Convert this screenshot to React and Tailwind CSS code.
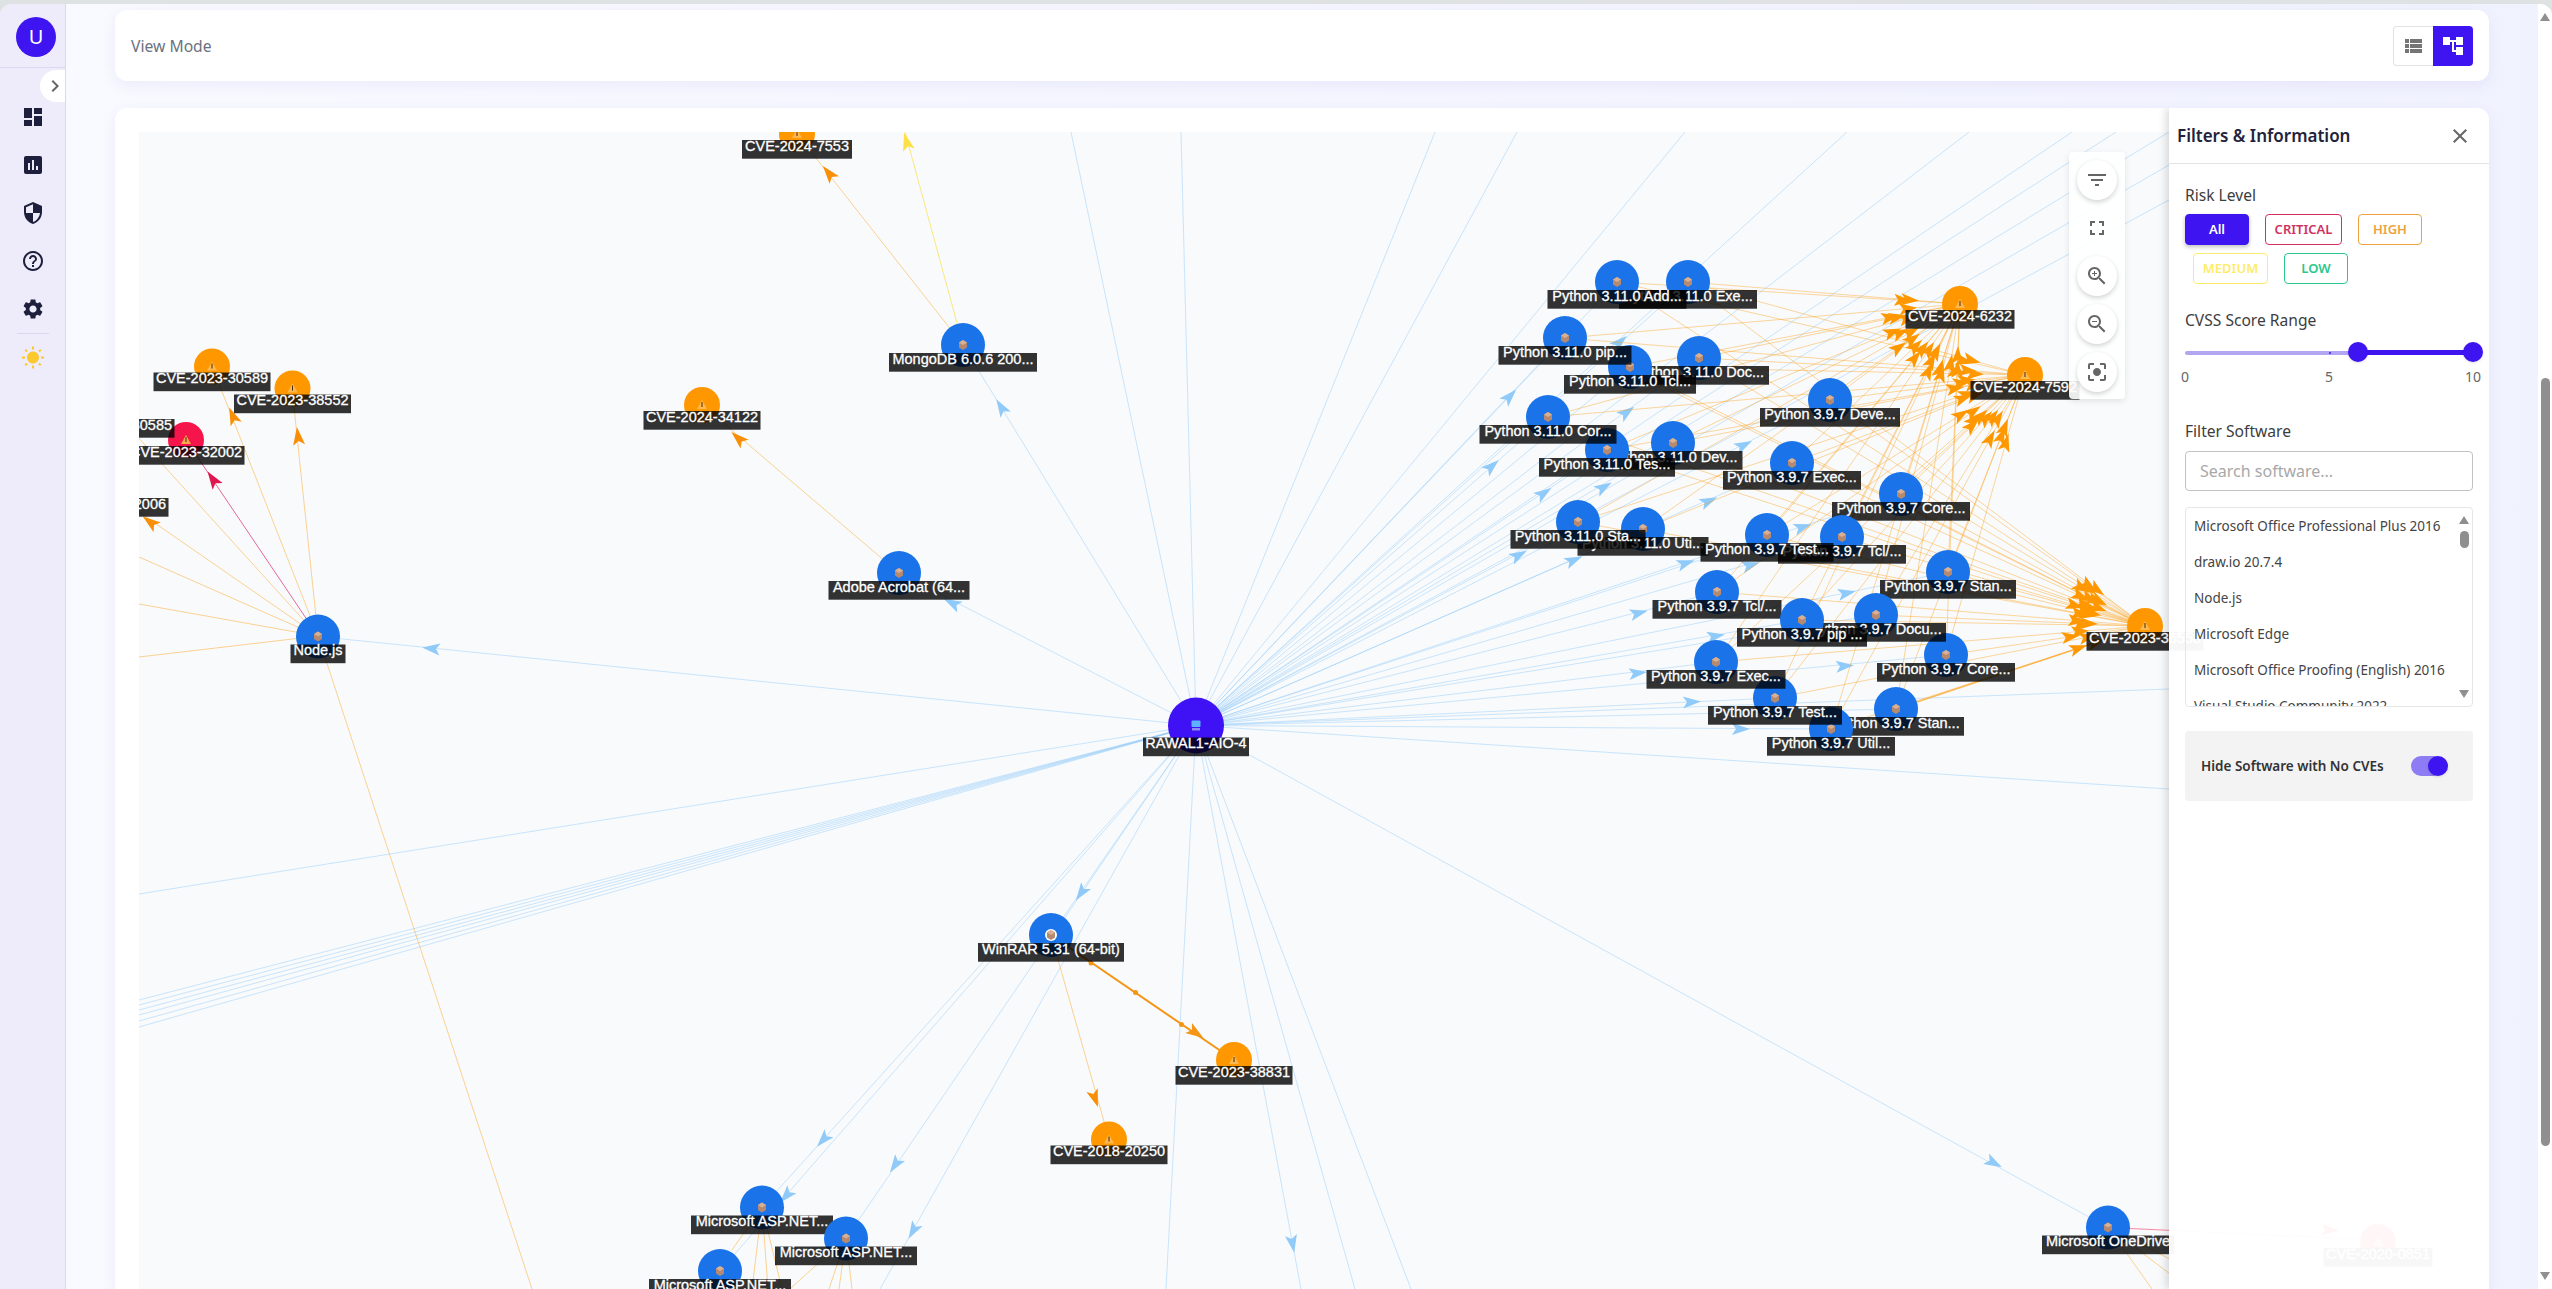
import React from 'react';

const SERVER = { x: 1196, y: 725.5 };
const CVE_6232 = { x: 1960, y: 304 };
const CVE_7592 = { x: 2025, y: 375 };
const CVE_3655 = { x: 2145, y: 626 };

// --- Graph data, in page pixels ---
const python = [
  { x: 1688, y: 282, t: 'Python 3.11.0 Exe...', w: 138, ax: 1620, ay: 342 },
  { x: 1617, y: 282, t: 'Python 3.11.0 Add...', w: 139, ax: 1510, ay: 396 },
  { x: 1699, y: 358, t: 'Python 3.11.0 Doc...', w: 140, ax: 1627, ay: 412 },
  { x: 1630, y: 367, t: 'Python 3.11.0 Tcl...', w: 132 },
  { x: 1565, y: 338, t: 'Python 3.11.0 pip...', w: 133 },
  { x: 1830, y: 400, t: 'Python 3.9.7 Deve...', w: 140, ax: 1744, ay: 445 },
  { x: 1673, y: 443, t: 'Python 3.11.0 Dev...', w: 139, ax: 1604, ay: 487 },
  { x: 1607, y: 450, t: 'Python 3.11.0 Tes...', w: 136, ax: 1544, ay: 493 },
  { x: 1548, y: 417, t: 'Python 3.11.0 Cor...', w: 137, ax: 1492, ay: 466 },
  { x: 1792, y: 463, t: 'Python 3.9.7 Exec...', w: 138, ax: 1709, ay: 501 },
  { x: 1901, y: 494, t: 'Python 3.9.7 Core...', w: 138, ax: 1803, ay: 527 },
  { x: 1643, y: 529, t: 'Python 3.11.0 Uti...', w: 131, ax: 1574, ay: 560 },
  { x: 1578, y: 522, t: 'Python 3.11.0 Sta...', w: 135, ax: 1519, ay: 555 },
  { x: 1842, y: 537, t: 'Python 3.9.7 Tcl/...', w: 128, ax: 1751, ay: 565 },
  { x: 1767, y: 535, t: 'Python 3.9.7 Test...', w: 133, ax: 1686, ay: 563 },
  { x: 1948, y: 572, t: 'Python 3.9.7 Stan...', w: 136, ax: 1847, ay: 593 },
  { x: 1717, y: 592, t: 'Python 3.9.7 Tcl/...', w: 129, ax: 1639, ay: 613 },
  { x: 1946, y: 655, t: 'Python 3.9.7 Core...', w: 138, ax: 1845, ay: 666 },
  { x: 1876, y: 615, t: 'Python 3.9.7 Docu...', w: 140 },
  { x: 1802, y: 620, t: 'Python 3.9.7 pip ...', w: 130, ax: 1716, ay: 636 },
  { x: 1896, y: 709, t: 'Python 3.9.7 Stan...', w: 136 },
  { x: 1831, y: 729, t: 'Python 3.9.7 Util...', w: 128, ax: 1741, ay: 729 },
  { x: 1775, y: 698, t: 'Python 3.9.7 Test...', w: 134, ax: 1692, ay: 702 },
  { x: 1716, y: 662, t: 'Python 3.9.7 Exec...', w: 139, ax: 1638, ay: 673 },
];

const software = [
  { x: 318, y: 636.5, t: 'Node.js', w: 55, ax: 431, ay: 648.5 },
  { x: 963, y: 345, t: 'MongoDB 6.0.6 200...', w: 148, ax: 1001, ay: 407 },
  { x: 899, y: 573, t: 'Adobe Acrobat (64...', w: 141, ax: 952, ay: 603 },
  { x: 1051, y: 935, t: 'WinRAR 5.31 (64-bit)', w: 146, ax: 1081, ay: 893, ring: true },
  { x: 720, y: 1271, t: 'Microsoft ASP.NET...', w: 142, ax: 786, ay: 1196 },
  { x: 762, y: 1207.5, t: 'Microsoft ASP.NET...', w: 142, ax: 823, ay: 1140 },
  { x: 846, y: 1238.5, t: 'Microsoft ASP.NET...', w: 142, ax: 895, ay: 1165 },
  { x: 2108, y: 1227.5, t: 'Microsoft OneDrive', w: 132, ax: 1994, ay: 1163 },
];

const cves = [
  { x: 797, y: 134, t: 'CVE-2024-7553', w: 110 },
  { x: 186, y: 440, t: 'CVE-2023-32002', w: 117, red: true },
  { x: 116, y: 413, t: 'CVE-2023-30585', w: 117 },
  { x: 110, y: 492, t: 'CVE-2023-32006', w: 117 },
  { x: 292.5, y: 388.5, t: 'CVE-2023-38552', w: 117 },
  { x: 212, y: 366.5, t: 'CVE-2023-30589', w: 117 },
  { x: 702, y: 405, t: 'CVE-2024-34122', w: 117 },
  { x: 1234, y: 1060, t: 'CVE-2023-38831', w: 117 },
  { x: 1109, y: 1139.5, t: 'CVE-2018-20250', w: 117 },
  { ...CVE_6232, t: 'CVE-2024-6232', w: 109 },
  { ...CVE_7592, t: 'CVE-2024-7592', w: 109 },
  { ...CVE_3655, t: 'CVE-2023-36558', w: 117 },
  { x: 2378, y: 1242, t: 'CVE-2020-0851', w: 109, red: true },
];

// blue lines whose far end is out of the canvas
const openLines = [
  [139, 894], [139, 1000], [139, 1005], [139, 1010], [139, 1015], [139, 1021], [139, 1027],
  [1071, 132], [1181, 132], [1435, 132], [1517, 132], [1685, 132], [1847, 132], [1969, 132],
  [2072, 132], [2116, 132], [2169, 132], [2169, 165], [2169, 200],
  [2169, 689], [2169, 789], [880, 1289], [1166, 1289], [1301, 1289], [1355, 1289], [1411, 1289],
];

const orangeLines = [
  [318, 636, 212, 366], [318, 636, 292, 388], [318, 636, 110, 492], [318, 636, 116, 413],
  [318, 636, 139, 557], [318, 636, 139, 604], [318, 636, 139, 657], [318, 636, 532, 1289],
  [963, 345, 797, 134], [899, 573, 702, 405], [1051, 935, 1109, 1139],
  [762, 1207, 732, 1250], [762, 1207, 752, 1289], [762, 1207, 768, 1289], [762, 1207, 782, 1289],
  [846, 1238, 790, 1289], [846, 1238, 829, 1289], [846, 1238, 839, 1289], [846, 1238, 852, 1289],
  [2108, 1227, 2152, 1289], [2108, 1227, 2190, 1289], [2108, 1227, 2210, 1280],
];

const orangeArrows = [
  [232.7, 415.7, 212, 366], [298, 436, 292, 388], [150, 522, 110, 492], [738, 438, 702, 405],
  [828.6, 173, 797, 134], [1095, 1098.6, 1109, 1139],
];

const softwareNames = [
  'Microsoft Office Professional Plus 2016',
  'draw.io 20.7.4',
  'Node.js',
  'Microsoft Edge',
  'Microsoft Office Proofing (English) 2016',
  'Visual Studio Community 2022',
];

const icons = {
  dashboard: 'M3 13h8V3H3v10zm0 8h8v-6H3v6zm10 0h8V11h-8v10zm0-18v6h8V3h-8z',
  assessment: 'M19 3H5c-1.1 0-2 .9-2 2v14c0 1.1.9 2 2 2h14c1.1 0 2-.9 2-2V5c0-1.1-.9-2-2-2zM9 17H7v-7h2v7zm4 0h-2V7h2v10zm4 0h-2v-4h2v4z',
  security: 'M12 1L3 5v6c0 5.55 3.84 10.74 9 12 5.16-1.26 9-6.45 9-12V5l-9-4zm0 10.99h7c-.53 4.12-3.28 7.79-7 8.94V12H5V6.3l7-3.11v8.8z',
  help: 'M11 18h2v-2h-2v2zm1-16C6.48 2 2 6.48 2 12s4.48 10 10 10 10-4.48 10-10S17.52 2 12 2zm0 18c-4.41 0-8-3.59-8-8s3.59-8 8-8 8 3.59 8 8-3.59 8-8 8zm0-14c-2.21 0-4 1.79-4 4h2c0-1.1.9-2 2-2s2 .9 2 2c0 2-3 1.75-3 5h2c0-2.25 3-2.5 3-5 0-2.21-1.79-4-4-4z',
  settings: 'M19.14 12.94c.04-.3.06-.61.06-.94 0-.32-.02-.64-.07-.94l2.03-1.58c.18-.14.23-.41.12-.61l-1.92-3.32c-.12-.22-.37-.29-.59-.22l-2.39.96c-.5-.38-1.03-.7-1.62-.94l-.36-2.54c-.04-.24-.24-.41-.48-.41h-3.84c-.24 0-.43.17-.47.41l-.36 2.54c-.59.24-1.13.57-1.62.94l-2.39-.96c-.22-.08-.47 0-.59.22L2.74 8.87c-.12.21-.08.47.12.61l2.03 1.58c-.05.3-.09.63-.09.94s.02.64.07.94l-2.03 1.58c-.18.14-.23.41-.12.61l1.92 3.32c.12.22.37.29.59.22l2.39-.96c.5.38 1.03.7 1.62.94l.36 2.54c.05.24.24.41.48.41h3.84c.24 0 .44-.17.47-.41l.36-2.54c.59-.24 1.13-.56 1.62-.94l2.39.96c.22.08.47 0 .59-.22l1.92-3.32c.12-.22.07-.47-.12-.61l-2.01-1.58zM12 15.6c-1.98 0-3.6-1.62-3.6-3.6s1.62-3.6 3.6-3.6 3.6 1.62 3.6 3.6-1.62 3.6-3.6 3.6z',
  sun: 'M6.76 4.84l-1.8-1.79-1.41 1.41 1.79 1.79 1.42-1.41zM4 10.5H1v2h3v-2zm9-9.95h-2V3.5h2V.55zm7.45 3.91l-1.41-1.41-1.79 1.79 1.41 1.41 1.79-1.79zm-3.21 13.7l1.79 1.8 1.41-1.41-1.8-1.79-1.4 1.4zM20 10.5v2h3v-2h-3zm-8-5c-3.31 0-6 2.69-6 6s2.69 6 6 6 6-2.69 6-6-2.69-6-6-6zm-1 16.95h2V19.5h-2v2.95zm-7.45-3.91l1.41 1.41 1.79-1.8-1.41-1.41-1.79 1.8z',
  chevron: 'M10 6L8.59 7.41 13.17 12l-4.58 4.59L10 18l6-6z',
  viewList: 'M3 14h4v-4H3v4zm0 5h4v-4H3v4zM3 9h4V5H3v4zm5 5h12v-4H8v4zm0 5h12v-4H8v4zM8 5v4h12V5H8z',
  tree: 'M22 11V3h-7v3H9V3H2v8h7V8h2v10h4v3h7v-8h-7v3h-2V8h2v3z',
  close: 'M19 6.41L17.59 5 12 10.59 6.41 5 5 6.41 10.59 12 5 17.59 6.41 19 12 13.41 17.59 19 19 17.59 13.41 12z',
  filter: 'M10 18h4v-2h-4v2zM3 6v2h18V6H3zm3 7h12v-2H6v2z',
  fullscreen: 'M7 14H5v5h5v-2H7v-3zm-2-4h2V7h3V5H5v5zm12 7h-3v2h5v-5h-2v3zM14 5v2h3v3h2V5h-5z',
  zoomIn: 'M15.5 14h-.79l-.28-.27C15.41 12.59 16 11.11 16 9.5 16 5.91 13.09 3 9.5 3S3 5.91 3 9.5 5.91 16 9.5 16c1.61 0 3.09-.59 4.23-1.57l.27.28v.79l5 4.99L20.49 19l-4.99-5zm-6 0C7.01 14 5 11.99 5 9.5S7.01 5 9.5 5 14 7.01 14 9.5 11.99 14 9.5 14zM12 10h-2v2H9v-2H7V9h2V7h1v2h2v1z',
  zoomOut: 'M15.5 14h-.79l-.28-.27C15.41 12.59 16 11.11 16 9.5 16 5.91 13.09 3 9.5 3S3 5.91 3 9.5 5.91 16 9.5 16c1.61 0 3.09-.59 4.23-1.57l.27.28v.79l5 4.99L20.49 19l-4.99-5zm-6 0C7.01 14 5 11.99 5 9.5S7.01 5 9.5 5 14 7.01 14 9.5 11.99 14 9.5 14zM7 9h5v1H7z',
  focus: 'M12 8c-2.21 0-4 1.79-4 4s1.79 4 4 4 4-1.79 4-4-1.79-4-4-4zm-7 7H3v4c0 1.1.9 2 2 2h4v-2H5v-4zM5 5h4V3H5c-1.1 0-2 .9-2 2v4h2V5zm14-2h-4v2h4v4h2V5c0-1.1-.9-2-2-2zm0 16h-4v2h4c1.1 0 2-.9 2-2v-4h-2v4z',
};

function Icon({ name, className }) {
  return (
    <svg viewBox="0 0 24 24" className={className} fill="currentColor">
      <path d={icons[name]} />
    </svg>
  );
}

function Arrow({ x, y, fromX, fromY, toX, toY, color }) {
  const ang = (Math.atan2(toY - fromY, toX - fromX) * 180) / Math.PI;
  return (
    <path
      d="M9 0 L-9 -6 L-5 0 L-9 6 Z"
      fill={color}
      transform={`translate(${x} ${y}) rotate(${ang})`}
    />
  );
}

function Label({ x, top, w, t }) {
  return (
    <g>
      <rect x={x - w / 2} y={top} width={w} height={18.7} fill="rgba(0,0,0,0.8)" />
      <text x={x} y={top + 10.7} textAnchor="middle" stroke="#fff" strokeWidth="0.3" className="fill-white font-['Liberation_Sans',Arial,sans-serif] text-[14.5px]">
        {t}
      </text>
    </g>
  );
}

function SoftwareNode({ x, y, t, w, ring }) {
  return (
    <g>
      <circle cx={x} cy={y} r="22" fill="#1a73e8" />
      {ring && <circle cx={x} cy={y} r="6" fill="#fff" />}
      <polygon points={`${x},${y - 5} ${x + 4},${y - 2.5} ${x + 4},${y + 2.5} ${x},${y + 5} ${x - 4},${y + 2.5} ${x - 4},${y - 2.5}`} fill="#b58a70" />
      <polygon points={`${x},${y - 5} ${x + 4},${y - 2.5} ${x},${y} ${x - 4},${y - 2.5}`} fill="#d8b095" />
      <Label x={x} top={y + 8} w={w} t={t} />
    </g>
  );
}

function CveNode({ x, y, t, w, red }) {
  return (
    <g>
      <circle cx={x} cy={y} r="18" fill={red ? '#f5154b' : '#ff9800'} />
      <polygon points={`${x},${y - 5} ${x + 5},${y + 4} ${x - 5},${y + 4}`} fill={red ? '#f8a94f' : '#ffb84f'} />
      <rect x={x - 0.5} y={y - 3} width="1" height="5" fill="#4a2a08" />
      <Label x={x} top={y + 6} w={w} t={t} />
    </g>
  );
}

function Graph() {
  return (
    <svg viewBox="139 132 2326 1157" className="w-[2326px] h-[1157px] block">
      {/* blue edges from the host */}
      {openLines.map(([x, y], i) => (
        <line key={i} x1={SERVER.x} y1={SERVER.y} x2={x} y2={y} stroke="#90caf9" strokeOpacity="0.45" />
      ))}
      {[...python, ...software].map((n, i) => (
        <line key={i} x1={SERVER.x} y1={SERVER.y} x2={n.x} y2={n.y} stroke="#90caf9" strokeOpacity="0.45" />
      ))}
      {python.concat(software).filter(n => n.ax).map((n, i) => (
        <Arrow key={i} x={n.ax} y={n.ay} fromX={SERVER.x} fromY={SERVER.y} toX={n.x} toY={n.y} color="#90caf9" />
      ))}
      <Arrow x={913} y={1231} fromX={SERVER.x} fromY={SERVER.y} toX={880} toY={1289} color="#90caf9" />
      <Arrow x={1292.6} y={1244} fromX={SERVER.x} fromY={SERVER.y} toX={1301} toY={1289} color="#90caf9" />

      {/* orange edges from python packages to their CVEs */}
      {python.map((p, i) => [CVE_6232, CVE_7592, CVE_3655].map((c, j) => (
        <line key={`${i}-${j}`} x1={p.x} y1={p.y} x2={c.x} y2={c.y} stroke="#ff9800" strokeOpacity="0.38" />
      )))}
      {python.map((p, i) => [CVE_6232, CVE_7592, CVE_3655].map((c, j) => {
        const d = Math.hypot(c.x - p.x, c.y - p.y);
        // the heads don't sit on one arc, spread them a bit
        const r = 50 + ((i * 7 + j * 5) % 26);
        return (
          <Arrow key={`${i}-${j}`} x={c.x - ((c.x - p.x) / d) * r} y={c.y - ((c.y - p.y) / d) * r} fromX={p.x} fromY={p.y} toX={c.x} toY={c.y} color="#ff9800" />
        );
      }))}
      <line x1="1896" y1="709" x2="2145" y2="626" stroke="#ff9800" strokeOpacity="0.5" strokeWidth="1.5" />

      {orangeLines.map(([a, b, c, d], i) => (
        <line key={i} x1={a} y1={b} x2={c} y2={d} stroke="#ff9800" strokeOpacity="0.42" />
      ))}
      {orangeArrows.map(([x, y, tx, ty], i) => (
        <Arrow key={i} x={x} y={y} fromX={x + (x - tx)} fromY={y + (y - ty)} toX={tx} toY={ty} color="#f98f06" />
      ))}

      {/* yellow + red + highlighted edges */}
      <line x1="963" y1="345" x2="905" y2="132" stroke="#fde047" strokeOpacity="0.7" />
      <Arrow x={906.5} y={141.5} fromX={963} fromY={345} toX={905} toY={132} color="#fde047" />
      <line x1="318" y1="636" x2="186" y2="440" stroke="#e0447f" strokeOpacity="0.8" />
      <Arrow x={212.6} y={479} fromX={318} fromY={636} toX={186} toY={440} color="#e0164f" />
      <line x1="2108" y1="1227.5" x2="2378" y2="1240" stroke="#f5154b" strokeOpacity="0.5" />
      <Arrow x={2330} y={1230} fromX={2108} fromY={1227} toX={2378} toY={1240} color="#f5154b" />
      <line x1="1051" y1="935" x2="1234" y2="1060" stroke="#f59514" strokeWidth="2" />
      <Arrow x={1196} y={1033} fromX={1051} fromY={935} toX={1234} toY={1060} color="#f59514" />
      <circle cx="1091" cy="963" r="2.5" fill="#f59514" />
      <circle cx="1135.5" cy="992.5" r="2.5" fill="#f59514" />
      <circle cx="1181.5" cy="1024.5" r="2.5" fill="#f59514" />

      {/* nodes, in paint order, labels overlap each other */}
      {cves.map((c, i) => <CveNode key={i} {...c} />)}
      {software.map((s, i) => <SoftwareNode key={i} {...s} />)}
      {python.map((p, i) => <SoftwareNode key={i} {...p} />)}

      <circle cx={SERVER.x} cy={SERVER.y} r="28" fill="#3f12f6" />
      <rect x={SERVER.x - 4.5} y={SERVER.y - 5} width="9" height="6.5" rx="1" fill="#5cb2ff" />
      <rect x={SERVER.x - 4} y={SERVER.y + 2.5} width="8" height="2.5" fill="#8d88ef" />
      <Label x={SERVER.x} top={SERVER.y + 12} w={106} t="RAWAL1-AIO-4" />
    </svg>
  );
}

function ControlButton({ name, flat }) {
  return (
    <button className={`w-10 h-10 rounded-full flex items-center justify-center text-[#666] ${flat ? '' : 'bg-white shadow-[0_2px_5px_rgba(0,0,0,0.18)]'}`}>
      <Icon name={name} className="w-6 h-6" />
    </button>
  );
}

function Chip({ label, className }) {
  return (
    <button className={`h-[31px] rounded-[4px] border text-[13px] font-semibold flex items-center justify-center ${className}`}>
      {label}
    </button>
  );
}

function FiltersPanel() {
  return (
    <aside className="absolute top-0 right-0 bottom-0 w-[320px] bg-white/[0.965] shadow-[-3px_0_8px_rgba(0,0,0,0.14)] text-[#3d3d3d]">
      <div className="h-[56px] border-b border-[#e4e4e4] pl-2 pr-4 flex items-center justify-between">
        <h2 className="text-[17px] font-semibold text-[#22223a] leading-none">Filters &amp; Information</h2>
        <Icon name="close" className="w-6 h-6 mr-[1px] text-[#666]" />
      </div>

      <div className="px-4">
        <div className="mt-[20px] text-[15.6px] leading-[22px]">Risk Level</div>
        <div className="mt-2 flex flex-wrap gap-x-2 gap-y-2 w-[288px]">
          <Chip label="All" className="w-[64px] bg-[#3e14f0] border-[#3e14f0] text-white shadow-[0_2px_4px_rgba(0,0,0,0.25)]" />
          <Chip label="CRITICAL" className="w-[77px] ml-2 border-[#d0325f] text-[#d0325f]" />
          <Chip label="HIGH" className="w-[64px] ml-2 border-[#eca23e] text-[#eca23e]" />
          <Chip label="MEDIUM" className="w-[75px] ml-2 border-[#fdec6b] text-[#fdec6b]" />
          <Chip label="LOW" className="w-[64px] ml-2 border-[#29c78c] text-[#29c78c]" />
        </div>

        <div className="mt-[25px] text-[15.6px] leading-[22px]">CVSS Score Range</div>
        <div className="relative mt-[19px] h-[5px]">
          <div className="absolute left-0 right-0 top-[0.5px] h-[4px] rounded-full bg-[#b2a5f2]" />
          <div className="absolute left-[173px] right-0 top-0 h-[5px] bg-[#3e14f0]" />
          <div className="absolute left-[144px] top-[1.5px] w-[2px] h-[2px] rounded-full bg-[#3e14f0]" />
          <div className="absolute left-[163px] top-[-8px] w-5 h-5 rounded-full bg-[#3e14f0] shadow-sm" />
          <div className="absolute right-[-10px] top-[-8px] w-5 h-5 rounded-full bg-[#3e14f0] shadow-sm" />
        </div>
        <div className="relative mt-[12px] h-[20px] text-[14px] leading-[20px] text-[#666]">
          <span className="absolute left-[-4px]">0</span>
          <span className="absolute left-[140px]">5</span>
          <span className="absolute right-[-8px]">10</span>
        </div>

        <div className="mt-[33px] text-[15.6px] leading-[22px]">Filter Software</div>
        <input
          className="mt-[9px] w-full h-[40px] rounded-[4px] border border-[#c2c2c2] px-[14px] text-[16px] outline-none placeholder:text-[#a8a8a8]"
          placeholder="Search software..."
        />

        <div className="relative mt-[16px] h-[200px] rounded-[4px] border border-[#e6e6e6] overflow-hidden">
          {softwareNames.map(name => (
            <div key={name} className="h-[36px] px-2 flex items-center text-[13.5px] whitespace-nowrap text-[#444]">{name}</div>
          ))}
          <svg viewBox="0 0 10 8" className="absolute right-[3px] top-[8px] w-[10px] h-[8px]"><path d="M5 0 L10 8 L0 8 Z" fill="#8f8f8f" /></svg>
          <div className="absolute right-[3px] top-[23px] w-[9px] h-[17px] rounded-full bg-[#8f8f8f]" />
          <svg viewBox="0 0 10 8" className="absolute right-[3px] bottom-[8px] w-[10px] h-[8px]"><path d="M0 0 L10 0 L5 8 Z" fill="#8f8f8f" /></svg>
        </div>

        <div className="mt-[24px] h-[70px] rounded-[4px] bg-[#f3f3f3] pl-4 pr-[29px] flex items-center justify-between">
          <span className="text-[13.5px] font-semibold text-[#333]">Hide Software with No CVEs</span>
          <div className="relative w-[33px] h-[20px] rounded-full bg-[#8d7cf3]">
            <div className="absolute right-[-4px] top-0 w-5 h-5 rounded-full bg-[#3e14f0] shadow" />
          </div>
        </div>
      </div>
    </aside>
  );
}

function Sidebar() {
  return (
    <nav className="relative w-[66px] shrink-0 bg-[#eeebfb] border-r border-[#d9d8ef] flex flex-col items-center">
      <div className="w-full h-[64px] border-b border-[#d9d8ef] flex items-center justify-center pl-[7px] pt-[2px]">
        <div className="w-10 h-10 rounded-full bg-[#3e14f0] text-white text-[20px] flex items-center justify-center">U</div>
      </div>
      <div className="absolute right-0 top-[66px] w-[25px] h-[32px] rounded-l-full bg-white flex items-center">
        <Icon name="chevron" className="w-6 h-6 ml-[3px] shrink-0 text-[#666]" />
      </div>
      <div className="mt-[37px] flex flex-col gap-6 text-[#1d1f3d]">
        <Icon name="dashboard" className="w-6 h-6" />
        <Icon name="assessment" className="w-6 h-6" />
        <Icon name="security" className="w-6 h-6" />
        <Icon name="help" className="w-6 h-6" />
        <Icon name="settings" className="w-6 h-6" />
      </div>
      <div className="mt-3 w-[32px] border-t border-[#d9d8ef]" />
      <Icon name="sun" className="mt-3 w-6 h-6 text-[#fbc82d]" />
    </nav>
  );
}

export default function App() {
  return (
    <div className="h-screen overflow-hidden bg-[#dfe2e3] pt-1 flex flex-col font-['Noto_Sans',sans-serif]">
      <div className="flex-1 min-h-0 flex rounded-t-xl overflow-hidden bg-gradient-to-r from-[#f9f9ff] to-[#f0f2fe]">
        <Sidebar />

        <main className="flex-1 min-w-0 flex flex-col px-[49px] pt-[6px]">
          <div className="h-[71px] shrink-0 rounded-xl bg-white shadow-[0_4px_14px_rgba(90,90,200,0.08)] pl-4 pr-4 flex items-center justify-between">
            <span className="pt-[2px] text-[15.7px] text-[#6b7280]">View Mode</span>
            <div className="flex h-10">
              <button className="w-10 rounded-l-[4px] border border-r-0 border-[#e2e2e2] bg-white flex items-center justify-center text-[#757575]">
                <Icon name="viewList" className="w-6 h-6" />
              </button>
              <button className="w-10 rounded-r-[4px] bg-[#3e14f0] flex items-center justify-center text-white">
                <Icon name="tree" className="w-6 h-6" />
              </button>
            </div>
          </div>

          <section className="relative mt-[27px] flex-1 min-h-0 rounded-t-xl bg-white shadow-[0_4px_14px_rgba(90,90,200,0.08)] overflow-hidden pt-6 px-6">
            <div className="relative h-[1157px] overflow-hidden bg-[#f8fafc]">
              <Graph />
              <div className="absolute left-[1930px] top-[20px] w-[56px] h-[247px] rounded bg-white/90 shadow-[0_2px_6px_rgba(0,0,0,0.1)] flex flex-col items-center gap-2 pt-2">
                <ControlButton name="filter" />
                <ControlButton name="fullscreen" flat />
                <ControlButton name="zoomIn" />
                <ControlButton name="zoomOut" />
                <ControlButton name="focus" />
              </div>
            </div>
            <FiltersPanel />
          </section>
        </main>

        {/* page scrollbar */}
        <div className="w-[14px] shrink-0 bg-white flex flex-col items-center pt-[9px] pb-[9px]">
          <svg viewBox="0 0 10 8" className="w-[10px] h-[8px]"><path d="M5 0 L10 8 L0 8 Z" fill="#8f8f8f" /></svg>
          <div className="mt-[357px] w-[9px] h-[768px] rounded-full bg-[#8f8f8f]" />
          <div className="flex-1" />
          <svg viewBox="0 0 10 8" className="w-[10px] h-[8px]"><path d="M0 0 L10 0 L5 8 Z" fill="#8f8f8f" /></svg>
        </div>
      </div>
    </div>
  );
}
